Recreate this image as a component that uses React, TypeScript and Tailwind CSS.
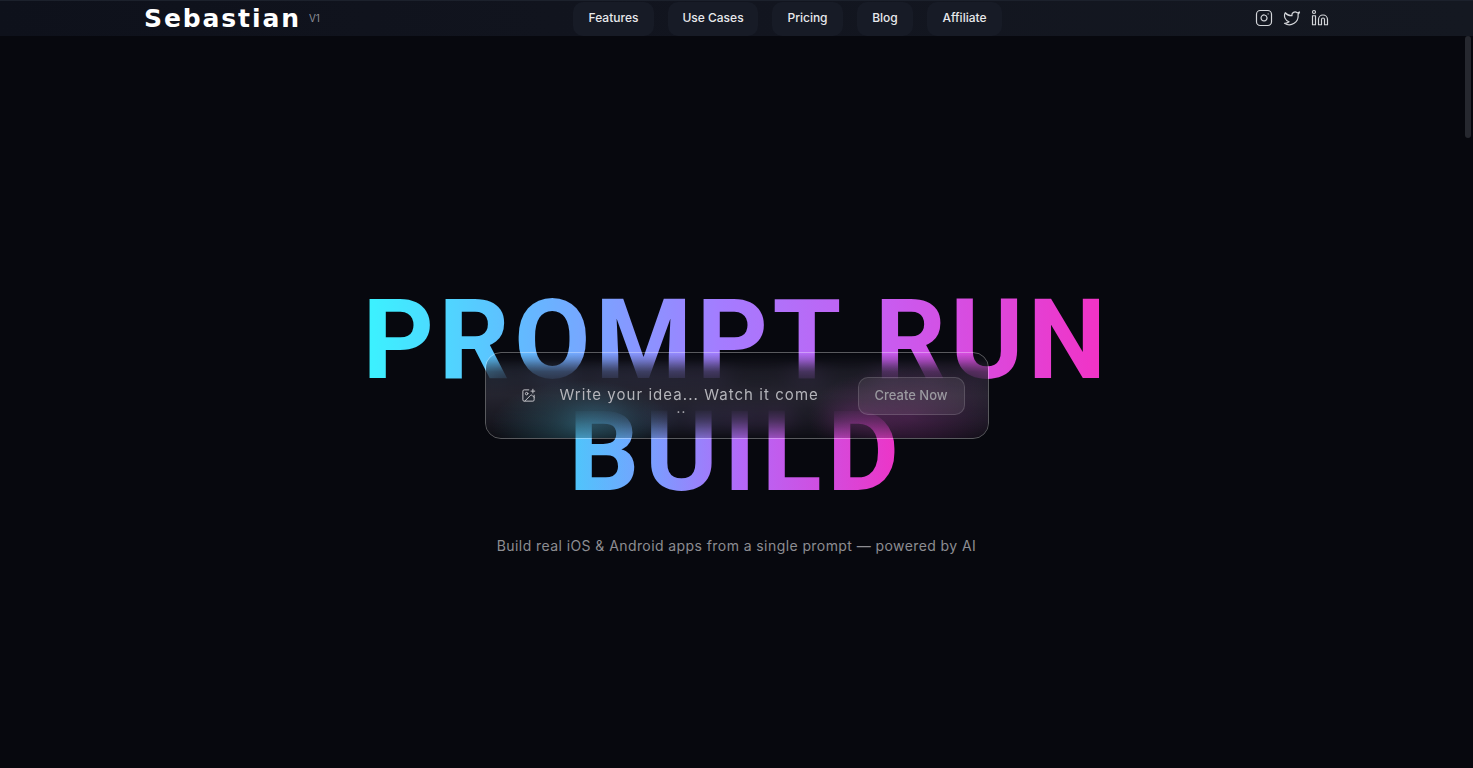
import { Instagram, Twitter, Linkedin, ImagePlus } from "lucide-react";

const nav = [
  { label: "Features", w: "w-[81px]" },
  { label: "Use Cases", w: "w-[90px]" },
  { label: "Pricing", w: "w-[71px]" },
  { label: "Blog", w: "w-[56px]" },
  { label: "Affiliate", w: "w-[75px]" },
];

export default function App() {
  return (
    <div className="relative h-[768px] overflow-hidden bg-[#07080e] font-['Inter',sans-serif] text-white">
      <header className="relative z-10 flex h-[36px] items-center border-t border-[#1c212c] bg-gradient-to-r from-[#0e111b] via-[#12151f] to-[#141821] pl-[144px] pr-[144px]">
        <div className="flex w-[429px] items-center gap-[8px]">
          <span className="font-['DejaVu_Sans',sans-serif] text-[25px] font-bold leading-none tracking-[1.9px] text-white">Sebastian</span>
          <span className="text-[10px] text-[#8c8f97]">V1</span>
        </div>
        <nav className="flex gap-[14px]">
          {nav.map((n) => (
            <a key={n.label} className={`${n.w} flex h-[34px] items-center justify-center rounded-[10px] bg-[#171b26] pb-[2px] text-[12px] font-medium text-[#e8e9ec]`}>
              {n.label}
            </a>
          ))}
        </nav>
        <div className="ml-auto flex items-center gap-[10px] pb-[2px] text-[#d4d6da]">
          <Instagram size={18} strokeWidth={1.6} />
          <Twitter size={18} strokeWidth={1.6} />
          <Linkedin size={18} strokeWidth={1.6} />
        </div>
      </header>

      <main className="flex h-[732px] flex-col items-center pt-[248px]">
        <div className="relative flex flex-col items-center">
          <h1 className="flex flex-col items-center font-['Roboto',sans-serif] text-[111px] font-bold leading-[112px]">
            <span className="bg-[linear-gradient(90deg,#3af4ff_0%,#64b8ff_22%,#a47cff_48%,#c85cf0_70%,#f331c4_100%)] bg-clip-text tracking-[4.4px] text-transparent">PROMPT RUN</span>
            <span className="bg-[linear-gradient(90deg,#4cc8fb_0%,#7a9eff_25%,#b568f8_52%,#d04ee0_75%,#f032c4_100%)] bg-clip-text tracking-[5.5px] text-transparent">BUILD</span>
          </h1>
          <div className="absolute left-1/2 top-[68px] h-[87px] w-[504px] -translate-x-1/2 overflow-hidden rounded-[16px] border border-[#ffffff55]">
            <div className="absolute inset-0 backdrop-blur-[14px] [mask-image:linear-gradient(to_bottom,transparent_8%,black_40%,black_65%,transparent_100%)]"></div>
            <div className="absolute inset-0 bg-[linear-gradient(180deg,#26253000_0%,#262530a6_22%,#292833d9_50%,#26253099_78%,#25242a40_100%)]"></div>
            <div className="absolute inset-0 bg-[radial-gradient(ellipse_90px_45px_at_19%_85%,#3a8ca066,transparent),radial-gradient(ellipse_100px_50px_at_84%_75%,#8f2f8a59,transparent)]"></div>
            <div className="relative flex h-full items-center pl-[35px] pr-[23px]">
              <ImagePlus size={15} strokeWidth={1.6} className="text-[#c3c3c8]" />
              <div className="ml-[24px] w-[258px] text-center text-[15px] leading-[17px] tracking-[1.05px] text-[#b4b4ba]">
                <div className="mt-[10px] whitespace-nowrap">Write your idea... Watch it come</div>
                <div className="pr-[14px] text-[12px] font-semibold leading-[12px]">..</div>
              </div>
              <button className="ml-auto h-[38px] w-[107px] rounded-[10px] border border-[#ffffff24] bg-[#ffffff14] text-[13px] font-medium text-[#9b9aa0]">
                Create Now
              </button>
            </div>
          </div>
        </div>
        <p className="mt-[27px] text-[14px] tracking-[0.42px] text-[#8d8d92]">
          Build real iOS &amp; Android apps from a single prompt — powered by AI
        </p>
      </main>

      <div className="absolute right-[2px] top-[36px] h-[102px] w-[6px] rounded-full bg-[#26282f]"></div>
    </div>
  );
}
